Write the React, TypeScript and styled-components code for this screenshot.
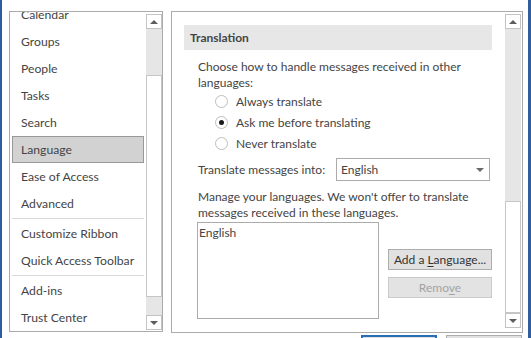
import React from 'react';
import styled, { createGlobalStyle } from 'styled-components';

const GlobalStyle = createGlobalStyle`
  html, body {
    margin: 0;
    padding: 0;
    background: #ffffff;
  }
  body {
    font-family: "Segoe UI", Lato, "Liberation Sans", sans-serif;
    font-size: 12px;
    color: #444444;
  }
`;

const Window = styled.div`
  width: 531px;
  height: 338px;
  box-sizing: border-box;
  border-left: 2px solid #2f5d9e;
  border-right: 3px solid #2f5d9e;
  background: #ffffff;
  overflow: hidden;
`;

const Body = styled.div`
  display: flex;
  gap: 8px;
  padding: 11px 0 0 7px;
`;

const Pane = styled.div<{ $width: number; $height: number }>`
  width: ${({ $width }) => $width}px;
  height: ${({ $height }) => $height}px;
  box-sizing: border-box;
  border: 1px solid #ababab;
  display: flex;
  overflow: hidden;
`;

const Viewport = styled.div`
  flex: 1;
  min-width: 0;
  overflow: hidden;
`;

/* ---------- left navigation list ---------- */

const NavList = styled.div`
  margin-top: -11px;
  display: flex;
  flex-direction: column;
  font-size: 12.2px;
`;

const NavItem = styled.div<{ $active?: boolean }>`
  height: 27px;
  box-sizing: border-box;
  margin: 0 2px;
  padding-left: 8px;
  line-height: 26px;
  white-space: nowrap;
  border: 1px solid ${({ $active }) => ($active ? '#999999' : 'transparent')};
  background: ${({ $active }) => ($active ? '#d2d2d2' : 'transparent')};
`;

const NavSeparator = styled.div`
  height: 1px;
  margin: 1px 2px 1px;
  background: #dadada;
`;

/* ---------- scrollbar ---------- */

const ScrollBar = styled.div<{ $padBottom: number; $gapRight: number }>`
  width: 16px;
  flex: none;
  display: flex;
  flex-direction: column;
  padding: 2px 0 ${({ $padBottom }) => $padBottom}px;
  margin-right: ${({ $gapRight }) => $gapRight}px;
`;

const ScrollButton = styled.div`
  height: 15px;
  box-sizing: border-box;
  border: 1px solid #c3c3c3;
  background: #ffffff;
  display: flex;
  align-items: center;
  justify-content: center;
  flex: none;
`;

const Arrow = styled.span<{ $down?: boolean }>`
  width: 0;
  height: 0;
  border-left: 4px solid transparent;
  border-right: 4px solid transparent;
  ${({ $down }) =>
    $down ? 'border-top: 4px solid #5c5c5c;' : 'border-bottom: 4px solid #5c5c5c;'}
`;

const Track = styled.div<{ $size: number }>`
  height: ${({ $size }) => $size}px;
  flex: none;
  background: #e6e6e6;
`;

const Thumb = styled.div<{ $size: number }>`
  height: ${({ $size }) => $size}px;
  flex: none;
  box-sizing: border-box;
  border: 1px solid #c6c6c6;
  background: #ffffff;
`;

function Scroller({
  before,
  thumb,
  after,
  padBottom,
  gapRight,
}: {
  before: number;
  thumb: number;
  after: number;
  padBottom: number;
  gapRight: number;
}) {
  return (
    <ScrollBar $padBottom={padBottom} $gapRight={gapRight}>
      <ScrollButton>
        <Arrow />
      </ScrollButton>
      <Track $size={before} />
      <Thumb $size={thumb} />
      <Track $size={after} />
      <ScrollButton>
        <Arrow $down />
      </ScrollButton>
    </ScrollBar>
  );
}

/* ---------- right settings page ---------- */

const Settings = styled.div`
  padding: 13px 0 0 12px;
  width: 308px;
`;

const SectionHeader = styled.div`
  height: 25px;
  box-sizing: border-box;
  background: #e7e7e7;
  padding-left: 6px;
  line-height: 25px;
  font-weight: 700;
  color: #444444;
`;

const Options = styled.div`
  padding-left: 14px;
`;

const Paragraph = styled.div<{ $top: number }>`
  margin-top: ${({ $top }) => $top}px;
  line-height: 16px;
`;

const RadioRow = styled.label`
  height: 21px;
  display: flex;
  align-items: center;
  gap: 8px;
  padding-left: 17px;
`;

const RadioCircle = styled.span<{ $checked?: boolean }>`
  width: 13px;
  height: 13px;
  box-sizing: border-box;
  border-radius: 50%;
  border: 1px solid #bdbdbd;
  background: #ffffff;
  display: flex;
  align-items: center;
  justify-content: center;
  &::after {
    content: '';
    width: 5px;
    height: 5px;
    border-radius: 50%;
    background: ${({ $checked }) => ($checked ? '#1a1a1a' : 'transparent')};
  }
`;

const FieldRow = styled.div`
  display: flex;
  align-items: center;
  margin-top: 4px;
`;

const FieldLabel = styled.span`
  width: 138px;
  flex: none;
`;

const Dropdown = styled.div`
  width: 154px;
  height: 23px;
  box-sizing: border-box;
  border: 1px solid #ababab;
  display: flex;
  align-items: center;
  justify-content: space-between;
  padding: 0 5px 0 4px;
`;

const DropArrow = styled.span`
  width: 0;
  height: 0;
  border-left: 4px solid transparent;
  border-right: 4px solid transparent;
  border-top: 4px solid #6a6a6a;
`;

const LanguageRow = styled.div`
  display: flex;
  gap: 9px;
  margin-top: 1px;
  margin-left: -1px;
`;

const LanguageBox = styled.div`
  width: 182px;
  height: 97px;
  box-sizing: border-box;
  border: 1px solid #ababab;
  padding: 2px 0 0 1px;
  line-height: 16px;
`;

const ButtonColumn = styled.div`
  display: flex;
  flex-direction: column;
  gap: 7px;
  padding-top: 27px;
`;

const PushButton = styled.button<{ $disabled?: boolean }>`
  width: 104px;
  height: 21px;
  box-sizing: border-box;
  padding: 0;
  font: inherit;
  color: ${({ $disabled }) => ($disabled ? '#a3a3a3' : '#333333')};
  background: ${({ $disabled }) => ($disabled ? '#e3e3e3' : '#e1e1e1')};
  border: 1px solid ${({ $disabled }) => ($disabled ? '#cacaca' : '#adadad')};
  line-height: 19px;
  text-align: center;

  u {
    text-decoration: underline;
    text-underline-offset: 2px;
  }
`;

/* ---------- dialog footer ---------- */

const Footer = styled.div`
  display: flex;
  justify-content: flex-end;
  gap: 9px;
  padding: 2px 6px 0 0;
`;

const FooterButton = styled.div<{ $primary?: boolean }>`
  width: 76px;
  height: 22px;
  box-sizing: border-box;
  border: ${({ $primary }) => ($primary ? '2px solid #2a6db4' : '1px solid #adadad')};
  background: #e1e1e1;
`;

const navTop = ['Calendar', 'Groups', 'People', 'Tasks', 'Search', 'Language', 'Ease of Access', 'Advanced'];
const navMid = ['Customize Ribbon', 'Quick Access Toolbar'];
const navEnd = ['Add-ins', 'Trust Center'];

export default function App() {
  return (
    <>
      <GlobalStyle />
      <Window>
        <Body>
          <Pane $width={154} $height={321}>
            <Viewport>
              <NavList>
                {navTop.map((n) => (
                  <NavItem key={n} $active={n === 'Language'}>
                    {n}
                  </NavItem>
                ))}
                <NavSeparator />
                {navMid.map((n) => (
                  <NavItem key={n}>{n}</NavItem>
                ))}
                <NavSeparator />
                {navEnd.map((n) => (
                  <NavItem key={n}>{n}</NavItem>
                ))}
              </NavList>
            </Viewport>
            <Scroller before={46} thumb={222} after={18} padBottom={1} gapRight={0} />
          </Pane>

          <Pane $width={352} $height={322}>
            <Viewport>
              <Settings>
                <SectionHeader>Translation</SectionHeader>
                <Options>
                  <Paragraph $top={9}>
                    Choose how to handle messages received in other
                    <br />
                    languages:
                  </Paragraph>
                  <RadioRow>
                    <RadioCircle />
                    Always translate
                  </RadioRow>
                  <RadioRow>
                    <RadioCircle $checked />
                    Ask me before translating
                  </RadioRow>
                  <RadioRow>
                    <RadioCircle />
                    Never translate
                  </RadioRow>
                  <FieldRow>
                    <FieldLabel>Translate messages into:</FieldLabel>
                    <Dropdown>
                      English
                      <DropArrow />
                    </Dropdown>
                  </FieldRow>
                  <Paragraph $top={8}>
                    Manage your languages. We won't offer to translate
                    <br />
                    messages received in these languages.
                  </Paragraph>
                  <LanguageRow>
                    <LanguageBox>English</LanguageBox>
                    <ButtonColumn>
                      <PushButton>
                        Add a <u>L</u>anguage...
                      </PushButton>
                      <PushButton $disabled>
                        Remo<u>v</u>e
                      </PushButton>
                    </ButtonColumn>
                  </LanguageRow>
                </Options>
              </Settings>
            </Viewport>
            <Scroller before={172} thumb={112} after={0} padBottom={4} gapRight={1} />
          </Pane>
        </Body>
        <Footer>
          <FooterButton $primary />
          <FooterButton />
        </Footer>
      </Window>
    </>
  );
}
